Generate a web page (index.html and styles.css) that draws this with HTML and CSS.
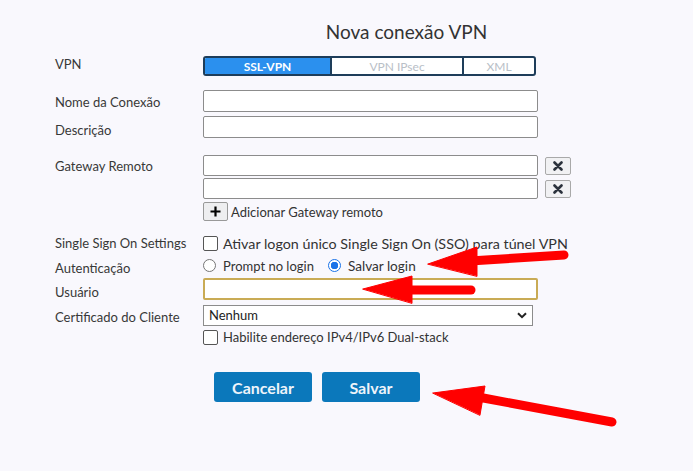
FILE: index.html
```html
<!DOCTYPE html>
<html lang="pt">
<head>
<meta charset="utf-8">
<title>Nova conexão VPN</title>
<link rel="stylesheet" href="styles.css">
</head>
<body>
<div class="page">
  <h1 class="title">Nova conexão VPN</h1>

  <div class="row row-vpn">
    <div class="label">VPN</div>
    <div class="toggle">
      <span class="seg seg-active">SSL-VPN</span>
      <span class="seg seg-ipsec">VPN IPsec</span>
      <span class="seg seg-xml">XML</span>
    </div>
  </div>

  <div class="row row-nome">
    <div class="label">Nome da Conexão</div>
    <div class="input"></div>
  </div>

  <div class="row row-desc">
    <div class="label">Descrição</div>
    <div class="input"></div>
  </div>

  <div class="row row-gw">
    <div class="label">Gateway Remoto</div>
    <div class="field-col">
      <div class="gw-line">
        <div class="input"></div>
        <button class="del-btn" type="button"><svg width="10" height="10" viewBox="0 0 10 10"><path d="M1.5 1.5 L8.5 8.5 M8.5 1.5 L1.5 8.5" stroke="#2b323c" stroke-width="2.6" stroke-linecap="round"/></svg></button>
      </div>
      <div class="gw-line">
        <div class="input"></div>
        <button class="del-btn" type="button"><svg width="10" height="10" viewBox="0 0 10 10"><path d="M1.5 1.5 L8.5 8.5 M8.5 1.5 L1.5 8.5" stroke="#2b323c" stroke-width="2.6" stroke-linecap="round"/></svg></button>
      </div>
      <div class="add-line">
        <button class="add-btn" type="button"><svg width="11" height="11" viewBox="0 0 11 11"><path d="M5.5 0.5 V10.5 M0.5 5.5 H10.5" stroke="#000" stroke-width="2.2"/></svg></button>
        <span>Adicionar Gateway remoto</span>
      </div>
    </div>
  </div>

  <div class="row row-sso">
    <div class="label">Single Sign On Settings</div>
    <label class="check check-sso"><span class="box"></span><span>Ativar logon único Single Sign On (SSO) para túnel VPN</span></label>
  </div>

  <div class="row row-auth">
    <div class="label">Autenticação</div>
    <div class="radios">
      <label class="radio"><span class="circle"></span><span>Prompt no login</span></label>
      <label class="radio radio-on"><span class="circle"></span><span>Salvar login</span></label>
    </div>
  </div>

  <div class="row row-user">
    <div class="label">Usuário</div>
    <div class="input input-focus"></div>
  </div>

  <div class="row row-cert">
    <div class="label">Certificado do Cliente</div>
    <div class="select">
      <span>Nenhum</span>
      <svg class="chev" width="10" height="7" viewBox="0 0 10 7"><path d="M1 1.2 L5 5.2 L9 1.2" fill="none" stroke="#222" stroke-width="2"/></svg>
    </div>
  </div>

  <div class="row row-dual">
    <div class="label"></div>
    <label class="check"><span class="box"></span><span>Habilite endereço IPv4/IPv6 Dual-stack</span></label>
  </div>

  <div class="actions">
    <button class="btn" type="button">Cancelar</button>
    <button class="btn" type="button">Salvar</button>
  </div>

  <svg class="arrows" width="693" height="471" viewBox="0 0 693 471">
    <g fill="#ff0000" stroke="#ff0000" stroke-linecap="round">
      <line x1="470" y1="261" x2="564" y2="255" stroke-width="9"/>
      <polygon points="428,264 477,247 477,276" stroke-width="1" stroke-linejoin="round"/>
      <line x1="405" y1="290" x2="471" y2="290" stroke-width="9"/>
      <polygon points="363,289 412,276 412,303" stroke-width="1" stroke-linejoin="round"/>
      <line x1="478" y1="397" x2="612" y2="422" stroke-width="9"/>
      <polygon points="433,393 485,386 480,415" stroke-width="1" stroke-linejoin="round"/>
    </g>
  </svg>
</div>
</body>
</html>
```

FILE: styles.css
```css
* { box-sizing: border-box; }

html, body {
  margin: 0;
  padding: 0;
  background: #f9f8fd;
}

body {
  font-family: Lato, "Open Sans", "Liberation Sans", sans-serif;
  color: #333;
  font-size: 13px;
}

.page {
  position: relative;
  width: 693px;
  height: 471px;
  padding: 0 0 0 55px;
  overflow: hidden;
}

.title {
  margin: 0;
  padding: 19px 0 0 65px;
  height: 44px;
  text-align: center;
  font-size: 19px;
  font-weight: 400;
  color: #333;
  line-height: 26px;
}

.row {
  display: flex;
  align-items: flex-start;
}

.label {
  width: 148px;
  flex: none;
  color: #383838;
  font-size: 13px;
  line-height: 16px;
}

/* VPN toggle */
.row-vpn { margin-top: 12px; height: 20px; }
.row-vpn .label { padding-top: 0; }

.toggle {
  display: flex;
  width: 333px;
  height: 20px;
  border: 2px solid #1e3d5a;
  border-radius: 3px;
  overflow: hidden;
  background: #fff;
}

.seg {
  display: flex;
  align-items: center;
  justify-content: center;
  font-size: 12px;
  font-weight: 700;
  color: #b9c0c7;
  height: 100%;
}

.seg-active {
  width: 125px;
  background: #2b90ee;
  color: #fff;
}

.seg-ipsec {
  width: 134px;
  border-left: 2px solid #1e3d5a;
  border-right: 2px solid #1e3d5a;
  font-weight: 400;
}

.seg-xml {
  flex: 1;
  font-weight: 400;
}

/* inputs */
.input {
  width: 335px;
  height: 22px;
  border: 1px solid #8c8c8c;
  border-radius: 2px;
  background: #fff;
}

.row-nome { margin-top: 14px; height: 22px; }
.row-nome .label { padding-top: 4px; }

.row-desc { margin-top: 4px; height: 22px; }
.row-desc .label { padding-top: 6px; }

.row-gw { margin-top: 17px; }
.row-gw .label { padding-top: 3px; }

.field-col {
  display: flex;
  flex-direction: column;
  gap: 2px;
}

.gw-line {
  display: flex;
  align-items: center;
}

.gw-line .input { height: 21px; }

.del-btn {
  display: flex;
  align-items: center;
  justify-content: center;
  margin-left: 7px;
  width: 26px;
  height: 18px;
  padding: 0;
  border: 1px solid #a9a9a9;
  border-radius: 2px;
  background: #f1f1f3;
}

.add-line {
  display: flex;
  align-items: center;
  margin-top: 1px;
  height: 19px;
  color: #333;
  font-size: 13px;
}

.add-btn {
  display: flex;
  align-items: center;
  justify-content: center;
  width: 25px;
  height: 19px;
  padding: 0;
  margin-right: 3px;
  border: 1px solid #999;
  border-radius: 2px;
  background: #eeeef0;
}

/* checkboxes */
.check {
  display: flex;
  align-items: center;
  color: #333;
  font-size: 13px;
  height: 16px;
}

.check-sso { font-size: 14.3px; }

.box {
  width: 15px;
  height: 15px;
  border: 1px solid #555;
  border-radius: 2px;
  background: #fff;
  margin-right: 5px;
  flex: none;
}

.row-sso { margin-top: 14px; height: 16px; }
.row-sso .label { padding-top: 0; }

/* radios */
.row-auth { margin-top: 8px; height: 13px; }
.row-auth .label { padding-top: 1px; }

.radios {
  display: flex;
  align-items: center;
  height: 13px;
  font-size: 13px;
  color: #333;
}

.radio {
  display: flex;
  align-items: center;
}

.radio + .radio { margin-left: 14px; }

.circle {
  width: 13px;
  height: 13px;
  border: 1px solid #767676;
  border-radius: 50%;
  background: #fff;
  margin-right: 7px;
  flex: none;
}

.radio-on .circle {
  border: 1px solid #1a73e8;
  background: radial-gradient(circle, #1a73e8 0 3.5px, #fff 4px);
}

.radio-on span + span { font-size: 13.6px; }

.row-user { margin-top: 6px; height: 22px; }
.row-user .label { padding-top: 6px; }

.input-focus {
  height: 22px;
  border: 2px solid #c9ab55;
}

/* select */
.row-cert { margin-top: 5px; height: 21px; }
.row-cert .label { padding-top: 4px; }

.select {
  position: relative;
  width: 330px;
  height: 21px;
  border: 1px solid #8c8c8c;
  background: #fff;
  padding-left: 5px;
  font-size: 13px;
  line-height: 19px;
  color: #222;
}

.chev {
  position: absolute;
  right: 5px;
  top: 6px;
}

.row-dual { margin-top: 3px; height: 16px; }

/* buttons */
.actions {
  display: flex;
  gap: 10px;
  margin-top: 27px;
  margin-left: 159px;
}

.btn {
  width: 98px;
  height: 30px;
  border: none;
  border-radius: 3px;
  background: #0b78bb;
  color: #eef4fa;
  font-family: Lato, "Open Sans", sans-serif;
  font-size: 16px;
  font-weight: 700;
  padding: 0;
}

.arrows {
  position: absolute;
  left: 0;
  top: 0;
  pointer-events: none;
}
```
